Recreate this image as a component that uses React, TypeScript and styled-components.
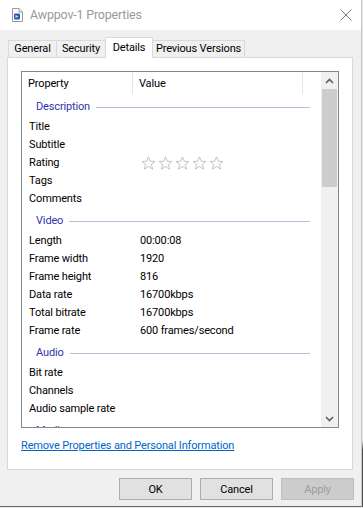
import React from 'react';
import styled, { createGlobalStyle } from 'styled-components';

const Global = createGlobalStyle`
  html, body { margin: 0; padding: 0; }
  body {
    background: linear-gradient(to bottom, #e4e4e4 0, #e4e4e4 440px, #4d4d4d 450px);
    font-family: Roboto, "Liberation Sans", Arial, sans-serif;
    font-size: 11px;
    letter-spacing: -0.15px;
    color: #000;
  }
`;

const Window = styled.div`
  width: 362px;
  height: 507px;
  box-sizing: border-box;
  border-right: 1px solid #c9c9c9;
  border-bottom: 1px solid #6a6a6a;
  background: #f0f0f0;
  display: flex;
  flex-direction: column;
`;

const TitleBar = styled.div`
  height: 30px;
  background: #fff;
  display: flex;
  align-items: center;
  padding: 0 9px 0 12px;
  flex-shrink: 0;
`;

const TitleText = styled.div`
  margin-left: 7px;
  flex: 1;
  font-size: 12.5px;
  letter-spacing: -0.2px;
  color: #9a9a9a;
  line-height: 16px;
`;

const TabArea = styled.div`
  padding: 7px 8px 0 7px;
  display: flex;
  flex-direction: column;
`;

const TabStrip = styled.div`
  display: flex;
  align-items: flex-end;
  height: 20px;
  padding-left: 1px;
  position: relative;
  z-index: 1;
`;

const Tab = styled.div<{ $w: number; $active?: boolean }>`
  width: ${p => p.$w}px;
  height: ${p => (p.$active ? 21 : 17)}px;
  margin-bottom: ${p => (p.$active ? -1 : 0)}px;
  box-sizing: border-box;
  margin-left: -1px;
  border: 1px solid #d9d9d9;
  border-bottom: none;
  background: ${p => (p.$active ? '#fff' : '#f0f0f0')};
  display: flex;
  align-items: ${p => (p.$active ? 'flex-start' : 'center')};
  padding-top: ${p => (p.$active ? 3 : 0)}px;
  justify-content: center;
  font-size: 11px;
  line-height: 14px;
  &:first-child { margin-left: 0; }
`;

const Panel = styled.div`
  height: 413px;
  box-sizing: border-box;
  border: 1px solid #d9d9d9;
  background: #fff;
  padding: 13px 13px 0 13px;
  display: flex;
  flex-direction: column;
`;

const ListView = styled.div`
  width: 318px;
  height: 357px;
  flex-shrink: 0;
  box-sizing: border-box;
  border: 1px solid #828790;
  display: flex;
  background: #fff;
`;

const ListContent = styled.div`
  flex: 1;
  overflow: hidden;
  display: flex;
  flex-direction: column;
  padding-top: 1px;
`;

const HeaderRow = styled.div`
  display: flex;
  height: 21px;
  flex-shrink: 0;
`;

const HeaderCell = styled.div<{ $w: number }>`
  width: ${p => p.$w}px;
  box-sizing: border-box;
  border-right: 1px solid #e5e5e5;
  padding: 3px 0 0 6px;
  line-height: 18px;
  height: 22px;
  margin-top: -1px;
`;

const GroupRow = styled.div`
  height: 24px;
  flex-shrink: 0;
  box-sizing: border-box;
  padding: 4px 11px 2px 14px;
  display: flex;
  align-items: center;
  color: #3232ad;
  line-height: 18px;
`;

const GroupLine = styled.div`
  flex: 1;
  height: 1px;
  background: #b6c0d8;
  margin-left: 6px;
`;

const Row = styled.div`
  display: flex;
  height: 18px;
  flex-shrink: 0;
  line-height: 18px;
`;

const NameCell = styled.div`
  width: 111px;
  padding-left: 7px;
  box-sizing: border-box;
  white-space: nowrap;
`;

const ValueCell = styled.div`
  padding-left: 7px;
  display: flex;
  align-items: center;
  white-space: nowrap;
`;

const Stars = styled.div`
  display: flex;
  gap: 2px;
  margin-left: 1px;
`;

const ScrollBar = styled.div`
  width: 17px;
  flex-shrink: 0;
  background: #f0f0f0;
  display: flex;
  flex-direction: column;
`;

const ScrollButton = styled.div`
  height: 17px;
  display: flex;
  align-items: center;
  justify-content: center;
  flex-shrink: 0;
`;

const ScrollTrack = styled.div`
  flex: 1;
  display: flex;
  flex-direction: column;
`;

const Thumb = styled.div`
  height: 98px;
  margin: 0 1px;
  background: #cdcdcd;
`;

const Link = styled.a`
  display: block;
  margin-top: 11px;
  color: #0066cc;
  text-decoration: underline;
  line-height: 14px;
  cursor: pointer;
`;

const Footer = styled.div`
  display: flex;
  justify-content: flex-end;
  gap: 8px;
  padding: 8px 7px 0 0;
`;

const Button = styled.button<{ $disabled?: boolean }>`
  width: 73px;
  height: 22px;
  box-sizing: border-box;
  border: 1px solid ${p => (p.$disabled ? '#bfbfbf' : '#adadad')};
  background: ${p => (p.$disabled ? '#cccccc' : '#e1e1e1')};
  color: ${p => (p.$disabled ? '#9d9d9d' : '#000')};
  font-family: inherit;
  font-size: 11px;
  letter-spacing: inherit;
  padding: 0;
`;

const FileIcon = () => (
  <svg width="11" height="14" viewBox="0 0 11 14">
    <path d="M0.5 0.5 H7 L10.5 4 V13.5 H0.5 Z" fill="#fff" stroke="#9a9a9a" />
    <path d="M7 0.5 V4 H10.5" fill="#eee" stroke="#9a9a9a" />
    <rect x="2" y="5.5" width="6" height="6" rx="1" fill="#2a5db0" />
    <path d="M3.5 7 L6.5 8.5 L3.5 10 Z" fill="#bfe0ff" />
  </svg>
);

const CloseIcon = () => (
  <svg width="12" height="12" viewBox="0 0 12 12">
    <path d="M0.5 0.5 L11.5 11.5 M11.5 0.5 L0.5 11.5" stroke="#7a7a7a" strokeWidth="1" />
  </svg>
);

const Star = () => (
  <svg width="15" height="14" viewBox="0 0 15 14">
    <path
      d="M7.5 0.8 L9.3 5.2 L14 5.5 L10.4 8.5 L11.6 13.2 L7.5 10.6 L3.4 13.2 L4.6 8.5 L1 5.5 L5.7 5.2 Z"
      fill="#fbfbfb"
      stroke="#c4c4c4"
      strokeWidth="1"
      strokeLinejoin="round"
    />
  </svg>
);

const Chevron = ({ up }: { up?: boolean }) => (
  <svg width="9" height="6" viewBox="0 0 9 6">
    <path d={up ? 'M1 5 L4.5 1.5 L8 5' : 'M1 1 L4.5 4.5 L8 1'} fill="none" stroke="#606060" strokeWidth="1.6" />
  </svg>
);

type Group = { title: string; rows: [string, string][] };

const groups: Group[] = [
  {
    title: 'Description',
    rows: [['Title', ''], ['Subtitle', ''], ['Rating', '*'], ['Tags', ''], ['Comments', '']],
  },
  {
    title: 'Video',
    rows: [
      ['Length', '00:00:08'],
      ['Frame width', '1920'],
      ['Frame height', '816'],
      ['Data rate', '16700kbps'],
      ['Total bitrate', '16700kbps'],
      ['Frame rate', '600 frames/second'],
    ],
  },
  {
    title: 'Audio',
    rows: [['Bit rate', ''], ['Channels', ''], ['Audio sample rate', '']],
  },
  {
    title: 'Media',
    rows: [],
  },
];

export default function App() {
  return (
    <>
      <Global />
      <Window>
        <TitleBar>
          <FileIcon />
          <TitleText>Awppov-1 Properties</TitleText>
          <CloseIcon />
        </TitleBar>
        <TabArea>
          <TabStrip>
            <Tab $w={49}>General</Tab>
            <Tab $w={50}>Security</Tab>
            <Tab $w={48} $active>Details</Tab>
            <Tab $w={93}>Previous Versions</Tab>
          </TabStrip>
          <Panel>
            <ListView>
              <ListContent>
                <HeaderRow>
                  <HeaderCell $w={111}>Property</HeaderCell>
                  <HeaderCell $w={170}>Value</HeaderCell>
                </HeaderRow>
                {groups.map(g => (
                  <React.Fragment key={g.title}>
                    <GroupRow>
                      {g.title}
                      <GroupLine />
                    </GroupRow>
                    {g.rows.map(([n, v]) => (
                      <Row key={n}>
                        <NameCell>{n}</NameCell>
                        <ValueCell>
                          {v === '*' ? (
                            <Stars>
                              <Star />
                              <Star />
                              <Star />
                              <Star />
                              <Star />
                            </Stars>
                          ) : (
                            v
                          )}
                        </ValueCell>
                      </Row>
                    ))}
                  </React.Fragment>
                ))}
              </ListContent>
              <ScrollBar>
                <ScrollButton>
                  <Chevron up />
                </ScrollButton>
                <ScrollTrack>
                  <Thumb />
                </ScrollTrack>
                <ScrollButton>
                  <Chevron />
                </ScrollButton>
              </ScrollBar>
            </ListView>
            <Link>Remove Properties and Personal Information</Link>
          </Panel>
        </TabArea>
        <Footer>
          <Button>OK</Button>
          <Button>Cancel</Button>
          <Button $disabled>Apply</Button>
        </Footer>
      </Window>
    </>
  );
}
